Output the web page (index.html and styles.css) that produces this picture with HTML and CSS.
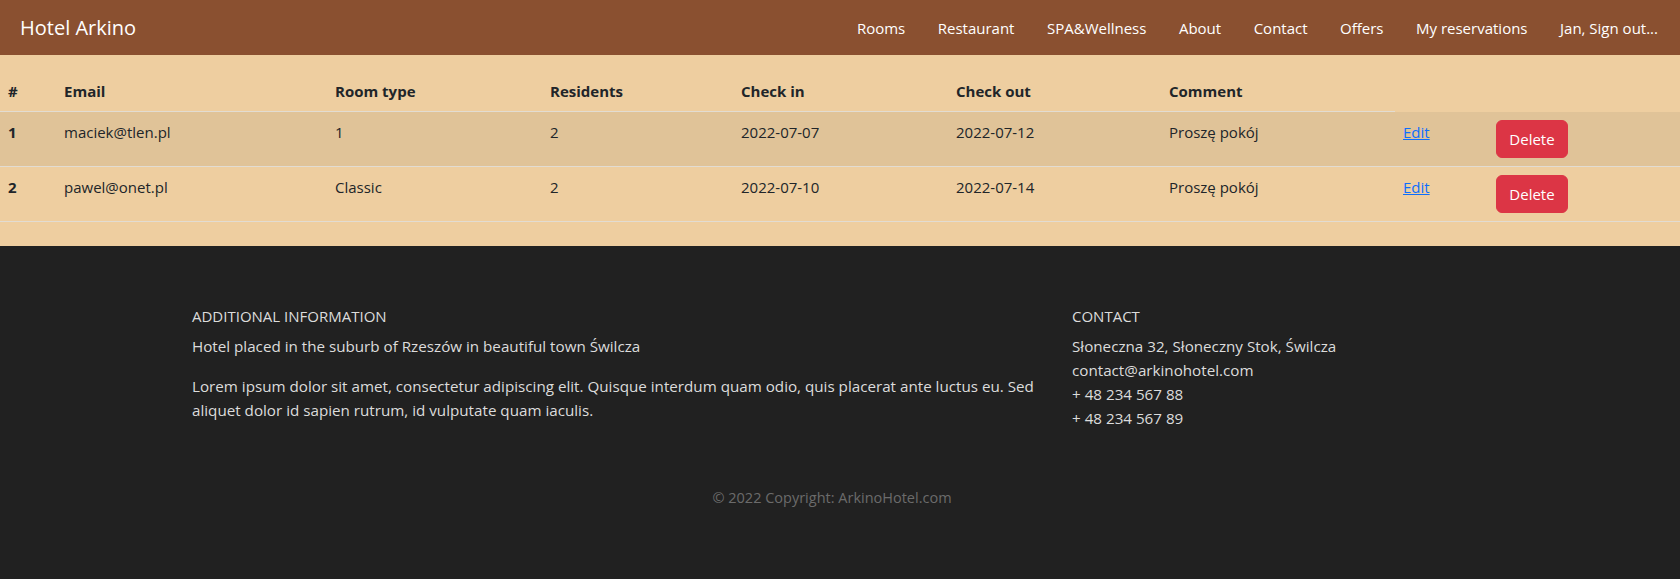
FILE: index.html
```html
<!DOCTYPE html>
<html lang="en">
<head>
<meta charset="utf-8">
<title>Hotel Arkino</title>
<link rel="stylesheet" href="styles.css">
</head>
<body>
<nav class="navbar">
  <a class="brand" href="#">Hotel Arkino</a>
  <ul class="nav">
    <li><a href="#">Rooms</a></li>
    <li><a href="#">Restaurant</a></li>
    <li><a href="#">SPA&amp;Wellness</a></li>
    <li><a href="#">About</a></li>
    <li><a href="#">Contact</a></li>
    <li><a href="#">Offers</a></li>
    <li><a href="#">My reservations</a></li>
    <li><a href="#">Jan, Sign out...</a></li>
  </ul>
</nav>
<main class="main">
  <table class="table">
    <colgroup>
      <col class="c1"><col class="c2"><col class="c3"><col class="c4"><col class="c5"><col class="c6"><col class="c7"><col class="c8"><col class="c9">
    </colgroup>
    <thead>
      <tr>
        <th>#</th><th>Email</th><th>Room type</th><th>Residents</th><th>Check in</th><th>Check out</th><th>Comment</th>
      </tr>
    </thead>
    <tbody>
      <tr class="striped">
        <th>1</th><td>maciek@tlen.pl</td><td>1</td><td>2</td><td>2022-07-07</td><td>2022-07-12</td><td>Proszę pokój</td>
        <td><a class="edit" href="#">Edit</a></td>
        <td><button class="btn-delete" type="button">Delete</button></td>
      </tr>
      <tr>
        <th>2</th><td>pawel@onet.pl</td><td>Classic</td><td>2</td><td>2022-07-10</td><td>2022-07-14</td><td>Proszę pokój</td>
        <td><a class="edit" href="#">Edit</a></td>
        <td><button class="btn-delete" type="button">Delete</button></td>
      </tr>
    </tbody>
  </table>
</main>
<footer class="footer">
  <div class="container">
    <div class="col-left">
      <h5 class="f-title">Additional information</h5>
      <p>Hotel placed in the suburb of Rzeszów in beautiful town Świlcza</p>
      <p>Lorem ipsum dolor sit amet, consectetur adipiscing elit. Quisque interdum quam odio, quis placerat ante luctus eu. Sed aliquet dolor id sapien rutrum, id vulputate quam iaculis.</p>
    </div>
    <div class="col-right">
      <h5 class="f-title">Contact</h5>
      <ul class="contact">
        <li>Słoneczna 32, Słoneczny Stok, Świlcza</li>
        <li>contact@arkinohotel.com</li>
        <li>+ 48 234 567 88</li>
        <li>+ 48 234 567 89</li>
      </ul>
    </div>
  </div>
  <div class="copyright">© 2022 Copyright: ArkinoHotel.com</div>
</footer>
</body>
</html>
```
FILE: styles.css
```css
* { box-sizing: border-box; }
html, body { margin: 0; padding: 0; }
body {
  font-family: "Open Sans", "Noto Sans", sans-serif;
  font-size: 15px;
  line-height: 24px;
  color: #212529;
  background: #eecea0;
}
.navbar {
  height: 55px;
  background: #8a5030;
  display: flex;
  align-items: center;
  justify-content: space-between;
  padding: 0 14px 0 20px;
}
.brand {
  color: #fff;
  text-decoration: none;
  font-size: 20px;
}
.nav {
  list-style: none;
  margin: 0;
  padding: 0;
  display: flex;
  gap: 16.5px;
}
.nav a {
  color: #fff;
  text-decoration: none;
  padding: 8px;
  font-size: 15px;
}
.main {
  padding: 16px 0 24px;
}
.table {
  width: 100%;
  border-collapse: collapse;
}
.c1 { width: 56px; }
.c2 { width: 271px; }
.c3 { width: 215px; }
.c4 { width: 191px; }
.c5 { width: 215px; }
.c6 { width: 213px; }
.c7 { width: 234px; }
.c8 { width: 93px; }
.table th, .table td {
  text-align: left;
  vertical-align: top;
  padding: 8px;
  border-bottom: 1px solid #e2dcd2;
  font-size: 15px;
  line-height: 24px;
}
.table th { font-weight: 700; }
.table td { font-weight: 400; }
.striped { background: #e0c398; }
.edit {
  color: #0d6efd;
  text-decoration: underline;
}
.btn-delete {
  font-family: inherit;
  font-size: 15px;
  line-height: 24px;
  height: 38px;
  width: 72px;
  padding: 6px 12px;
  color: #fff;
  background: #dc3545;
  border: 1px solid #dc3545;
  border-radius: 6px;
}
.footer {
  background: #212121;
  color: #dcdcdc;
  min-height: 334px;
}
.container {
  width: 1320px;
  margin: 0 auto;
  display: flex;
  padding-top: 60px;
}
.col-left { width: 880px; padding: 0 12px; }
.col-right { width: 440px; padding: 0 12px; }
.f-title {
  margin: 0 0 8px;
  font-size: 15px;
  font-weight: 400;
  line-height: 20px;
  text-transform: uppercase;
}
.footer p { margin: 0 0 16px; font-size: 15.2px; }
.contact { list-style: none; margin: 0; padding: 0; font-size: 15.2px; }
.copyright {
  text-align: center;
  padding: 48px 32px 16px 16px;
  color: #6b6b6b;
  font-size: 14.5px;
}
```
